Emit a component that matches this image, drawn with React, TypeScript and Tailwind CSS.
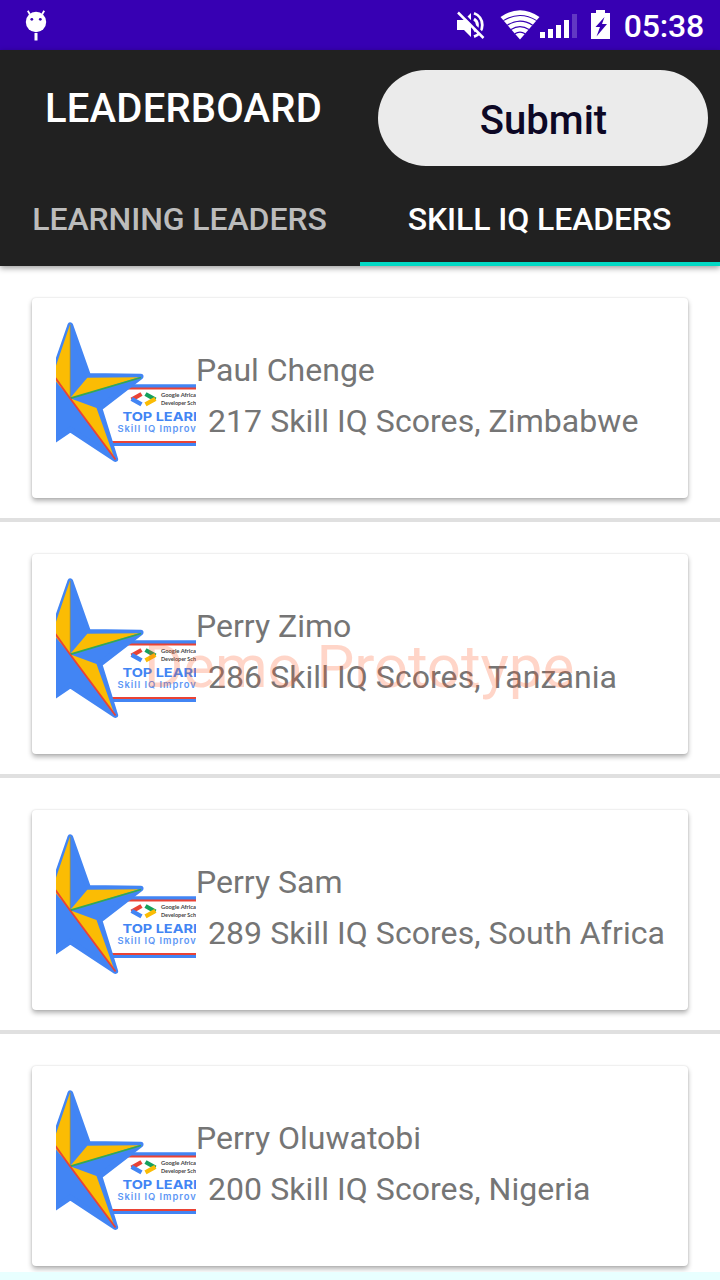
const leaders = [
  { name: "Paul Chenge", detail: "217 Skill IQ Scores, Zimbabwe" },
  { name: "Perry Zimo", detail: "286 Skill IQ Scores, Tanzania" },
  { name: "Perry Sam", detail: "289 Skill IQ Scores, South Africa" },
  { name: "Perry Oluwatobi", detail: "200 Skill IQ Scores, Nigeria" },
];

function DebugIcon() {
  return (
    <svg className="ml-6 h-[50px] w-6" viewBox="24 0 24 50" fill="#fff">
      <circle cx="36" cy="22" r="10.2" />
      <path d="M30 14.5L27.8 10.8M42 14.5L44.2 10.8" stroke="#fff" strokeWidth="1.8" />
      <circle cx="31.8" cy="19.3" r="1.4" fill="#3700b3" />
      <circle cx="40.3" cy="19.3" r="1.4" fill="#3700b3" />
      <rect x="34.5" y="33" width="3" height="7.5" />
    </svg>
  );
}

function StatusIcons() {
  return (
    <svg className="ml-auto h-[50px] w-[160px]" viewBox="452 0 160 50" fill="#fff">
      {/* Muted ringer */}
      <path d="M457 20h7l7-7v24l-7-7h-7z" />
      <path d="M474 19a7 7 0 0 1 0 12" fill="none" stroke="#fff" strokeWidth="3" />
      <path d="M474 13.2a12.4 12.4 0 0 1 0 23.4" fill="none" stroke="#fff" strokeWidth="2.8" />
      <path d="M460 11L486 37.5" stroke="#3700b3" strokeWidth="3" />
      <path d="M458 12.5L483.5 38" stroke="#fff" strokeWidth="2.5" />
      {/* Wi-Fi */}
      <path d="M520 39.5L500.5 17Q520 3.5 539.5 17Z" />
      <path d="M503.3 20.6Q520 10.4 536.7 20.6M507.3 25.2Q520 17 532.7 25.2M511 29.5Q520 23.8 529 29.5M514.8 33.8Q520 30.4 525.2 33.8" fill="none" stroke="#3700b3" strokeWidth="1.1" />
      {/* Mobile signal */}
      <path d="M540 32h5v6h-5zM548 29h5v9h-5zM556 25h5v13h-5zM564 20h5v18h-5z" />
      <path d="M572 14h5v24h-5z" opacity=".22" />
      {/* Charging battery */}
      <path d="M591 13h5v-3h9v3h5v26h-19z" />
      <path d="M604.5 17L595.5 27h4.5l-3.5 9.5 10.5-12.5h-5z" fill="#3700b3" />
    </svg>
  );
}

function Badge() {
  return (
    <svg className="h-[140px] w-[140px] shrink-0" viewBox="0 0 140 140">
      <path d="M40 62.2h100v61.8H40z" fill="#4285f4" />
      <path d="M40 65.6h100v55.3H40z" fill="#ea4335" />
      <path d="M40 67.5h100v51.6H40z" fill="#fff" />
      <path d="M14.3 3L32.3 53.8L84.8 54.5L43.6 86.2 59.4 137.2 14.3 107.5-29.5 137-14 86.5-56 55H-3.8Z" fill="#4285f4" stroke="#4285f4" strokeWidth="5.5" strokeLinejoin="round" />
      <path d="M14.2 2V76.3L-3.8 55ZM31.3 55.8L83 55.3 14 76.3ZM14 76.3L40.5 86 58 135Z" fill="#fbbc04" />
      <path d="M14.2 3V76" stroke="#91894f" strokeWidth=".7" />
      <path d="M14 76.3L85 55.5" stroke="#34a853" strokeWidth="1.8" />
      <path d="M-3 52.5L14 76.3 59.5 137.5" fill="none" stroke="#ea4335" strokeWidth="1.8" />
      <g fill="none" strokeWidth="4.3">
        <path d="M85.5 72L75.6 77.6" stroke="#ea4335" />
        <path d="M75.6 76.8L85.5 82.3" stroke="#4285f4" />
        <path d="M89.5 72L99.4 77.6" stroke="#16a05d" />
        <path d="M99.4 76.8L89.5 82.3" stroke="#fbbc04" />
      </g>
      <g fontFamily="Lato, sans-serif" fontSize="5.6" fontWeight="700" fill="#444">
        <text x="105" y="75.4" textLength="35" lengthAdjust="spacingAndGlyphs">Google Africa</text>
        <text x="105" y="82.5" textLength="35" lengthAdjust="spacingAndGlyphs">Developer Sch</text>
      </g>
      <g fontFamily="Inter, sans-serif" fill="#4285f4">
        <text x="66.5" y="99" fontSize="12.4" fontWeight="700" textLength="81.5" lengthAdjust="spacingAndGlyphs">TOP LEARN</text>
        <text x="61.4" y="109.8" fontSize="9.4" fontWeight="600" textLength="78.4" opacity=".85">Skill IQ Improv</text>
      </g>
    </svg>
  );
}

export default function App() {
  return (
    <div className="relative flex h-[1280px] w-[720px] flex-col overflow-hidden bg-white font-['Roboto',sans-serif]">
      <div className="flex h-[50px] shrink-0 items-center bg-[#3700b3]">
        <DebugIcon />
        <StatusIcons />
        <span className="mr-4 ml-3 pt-0.5 text-[32px] leading-[48px] font-medium tracking-[-0.2px] text-white">05:38</span>
      </div>
      <header className="z-10 shrink-0 bg-[#212121] shadow-[0_2px_6px_rgba(0,0,0,0.4)]">
        <div className="flex h-[122px] items-start justify-between pt-5 pr-3 pl-[45px]">
          <h1 className="pt-[15px] text-[40px] leading-[47px] font-medium tracking-[0.2px] text-white">LEADERBOARD</h1>
          <button className="h-24 w-[330px] rounded-full bg-[#ebebeb] pt-[6px] pl-px text-[40px] font-medium text-[#0d0825]">Submit</button>
        </div>
        <nav className="grid h-[94px] grid-cols-2 text-[32px] leading-[90px] font-medium tracking-[-0.1px] whitespace-nowrap">
          <div className="pt-0.5 pr-px text-center text-[#bcbcbc]">LEARNING LEADERS</div>
          <div className="h-[94px] border-b-4 border-[#03dac5] pt-0.5 pr-px text-center text-white">SKILL IQ LEADERS</div>
        </nav>
      </header>
      <main className="h-[1006px] shrink-0 overflow-hidden">
        {leaders.map((leader) => (
          <div key={leader.name} className="h-64 border-b-4 border-[#e0e0e0] px-8 pt-8">
            <div className="flex h-[200px] rounded bg-white pt-6 pl-6 shadow-[0_3px_5px_rgba(0,0,0,0.3),0_0_2px_rgba(0,0,0,0.14)]">
              <Badge />
              <div className="pt-[29px] text-[32px] leading-[38px] whitespace-nowrap text-[#757575]">
                <div>{leader.name}</div>
                <div className="mt-[13px] ml-3 tracking-[0.06px]">{leader.detail}</div>
              </div>
            </div>
          </div>
        ))}
      </main>
      <div className="h-2 shrink-0 bg-[#e8ffff]" />
      <div className="pointer-events-none absolute top-[635px] left-[144px] z-20 text-[60px] leading-[64px] tracking-[-0.1px] whitespace-nowrap text-[#ff5722]/25">
        Demo Prototype
      </div>
    </div>
  );
}
